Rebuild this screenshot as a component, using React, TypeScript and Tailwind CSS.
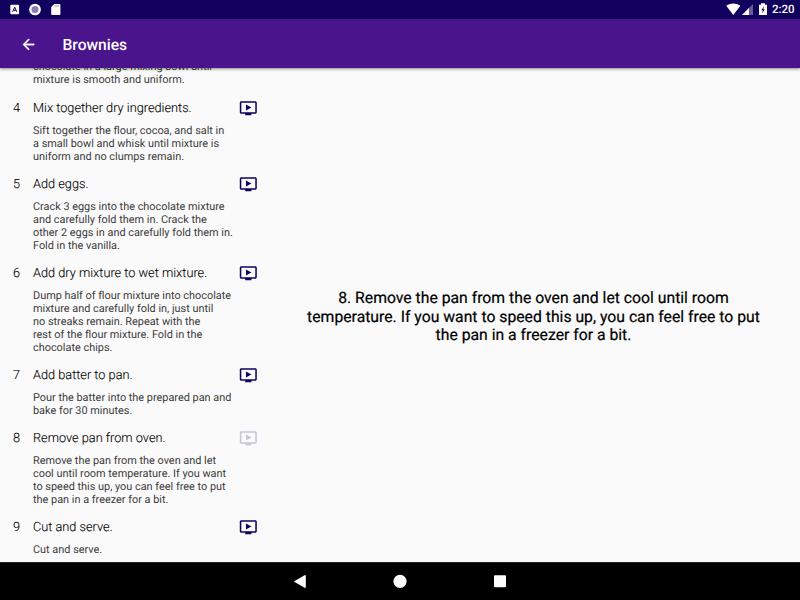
type Step = { number: number; title: string; lines: string[]; active?: boolean };

const steps: Step[] = [
  {
    number: 4,
    title: 'Mix together dry ingredients.',
    lines: [
      'Sift together the flour, cocoa, and salt in',
      'a small bowl and whisk until mixture is',
      'uniform and no clumps remain.',
    ],
  },
  {
    number: 5,
    title: 'Add eggs.',
    lines: [
      'Crack 3 eggs into the chocolate mixture',
      'and carefully fold them in. Crack the',
      'other 2 eggs in and carefully fold them in.',
      'Fold in the vanilla.',
    ],
  },
  {
    number: 6,
    title: 'Add dry mixture to wet mixture.',
    lines: [
      'Dump half of flour mixture into chocolate',
      'mixture and carefully fold in, just until',
      'no streaks remain. Repeat with the',
      'rest of the flour mixture. Fold in the',
      'chocolate chips.',
    ],
  },
  {
    number: 7,
    title: 'Add batter to pan.',
    lines: ['Pour the batter into the prepared pan and', 'bake for 30 minutes.'],
  },
  {
    number: 8,
    title: 'Remove pan from oven.',
    lines: [
      'Remove the pan from the oven and let',
      'cool until room temperature. If you want',
      'to speed this up, you can feel free to put',
      'the pan in a freezer for a bit.',
    ],
    active: true,
  },
  { number: 9, title: 'Cut and serve.', lines: ['Cut and serve.'] },
];

function VideoIcon({ faded }: { faded?: boolean }) {
  return (
    <svg
      viewBox="0 0 24 24"
      className={faded ? '-mt-[1.4px] h-[18.6px] w-[18.6px] text-[#c8c4de]' : '-mt-[1.4px] h-[18.6px] w-[18.6px] text-[#12005e]'}
      fill="currentColor"
    >
      <path d="M21 3H3c-1.11 0-2 .89-2 2v12c0 1.1.89 2 2 2h5v2h8v-2h5c1.1 0 1.99-.9 1.99-2L23 5c0-1.11-.9-2-2-2zm0 14H3V5h18v12zm-5-6l-7 4V7z" />
    </svg>
  );
}

function Description({ lines }: { lines: string[] }) {
  return (
    <div className="pl-[33px] text-[10.9px] leading-[13px] text-[#3a3a3a]">
      {lines.map((line) => (
        <p key={line} className="whitespace-nowrap">
          {line}
        </p>
      ))}
    </div>
  );
}

function StepRow({ step }: { step: Step }) {
  return (
    <li className="pb-[13px]">
      <div className="mb-1.5 flex h-[18px] items-center text-[12.75px] leading-[18px] font-light text-black [-webkit-text-stroke:0.1px_#000]">
        <span className="w-[33px] pl-[13px]">{step.number}</span>
        <span className="w-[206.3px] whitespace-nowrap">{step.title}</span>
        <VideoIcon faded={step.active} />
      </div>
      <Description lines={step.lines} />
    </li>
  );
}

function StatusBar() {
  return (
    <div className="flex h-[19px] shrink-0 items-center bg-[#12005e] text-white">
      <svg className="h-[19px] w-[70px]" viewBox="0 0 70 19">
        <rect x="10.3" y="4.7" width="8.8" height="9.6" rx="1" fill="#fff" />
        <path d="M12.6 11.8l2.1-4.6 2.1 4.6M13.5 10.3h2.4" fill="none" stroke="#12005e" strokeWidth="1" />
        <circle cx="35" cy="9.5" r="4.7" fill="#8580b0" stroke="#fff" strokeWidth="2.3" />
        <path d="M54.2 4h5.2a1 1 0 0 1 1 1v9a1 1 0 0 1-1 1h-7.2a1 1 0 0 1-1-1V7z" fill="#fff" />
        <path d="M54.4 5.9h4.8" stroke="#9a96bd" strokeWidth="1" />
      </svg>
      <svg className="ml-auto h-[19px] w-[46px]" viewBox="0 0 46 19">
        <path d="M0.2 5.8Q7.3 1 14.4 5.8L7.3 15z" fill="#fff" />
        <path d="M27 4v11H16z" fill="#655b98" />
        <path d="M23 8v7h-7z" fill="#fff" />
        <path d="M33 4.7h2V3.3h4v1.4h2V15h-8z" fill="#fff" />
        <path d="M38 6.2l-2.7 4h1.5l-.6 3 2.6-4h-1.5z" fill="#12005e" />
      </svg>
      <span className="w-[28px] text-[11.5px] leading-[19px] font-medium">2:20</span>
    </div>
  );
}

export default function App() {
  return (
    <div className="flex h-[600px] w-[800px] flex-col overflow-hidden bg-[#fafafa] font-['Roboto',sans-serif] [text-rendering:geometricPrecision]">
      <StatusBar />
      <header className="z-10 flex h-[49px] shrink-0 items-center bg-[#4a148c] pt-0.5 text-white shadow-[0_1px_3px_rgba(0,0,0,0.45)]">
        <svg className="ml-5 h-[17px] w-[17px]" viewBox="0 0 24 24" fill="currentColor" stroke="currentColor" strokeWidth="0.5">
          <path d="M20 11H7.83l5.59-5.59L12 4l-8 8 8 8 1.41-1.41L7.83 13H20v-2z" />
        </svg>
        <h1 className="ml-[25.5px] text-[15.6px] leading-5 font-medium">Brownies</h1>
      </header>
      <main className="flex min-h-0 flex-1 overflow-hidden">
        <section className="-mt-[8px] w-[267px] shrink-0">
          <div className="pb-[14px]">
            <Description lines={['chocolate in a large mixing bowl until', 'mixture is smooth and uniform.']} />
          </div>
          <ul>
            {steps.map((step) => (
              <StepRow key={step.number} step={step} />
            ))}
          </ul>
        </section>
        <section className="flex flex-1 items-center justify-center pt-1">
          <p className="text-center text-[15.75px] leading-[18.4px] whitespace-nowrap text-black [-webkit-text-stroke:0.2px_#000]">
            8. Remove the pan from the oven and let cool until room
            <br />
            temperature. If you want to speed this up, you can feel free to put
            <br />
            the pan in a freezer for a bit.
          </p>
        </section>
      </main>
      <nav className="h-[38px] shrink-0 border-t border-[#222] bg-black">
        <svg className="h-[37px] w-[800px]" viewBox="0 0 800 37" fill="#fff">
          <path d="M304.6 12.3a.8.8 0 0 1 1.2.6v11.2a.8.8 0 0 1-1.2.6l-10-5.6a.7.7 0 0 1 0-1.2z" />
          <circle cx="400" cy="18.3" r="6.6" />
          <rect x="494" y="12.2" width="12" height="12" rx="1" />
        </svg>
      </nav>
    </div>
  );
}
